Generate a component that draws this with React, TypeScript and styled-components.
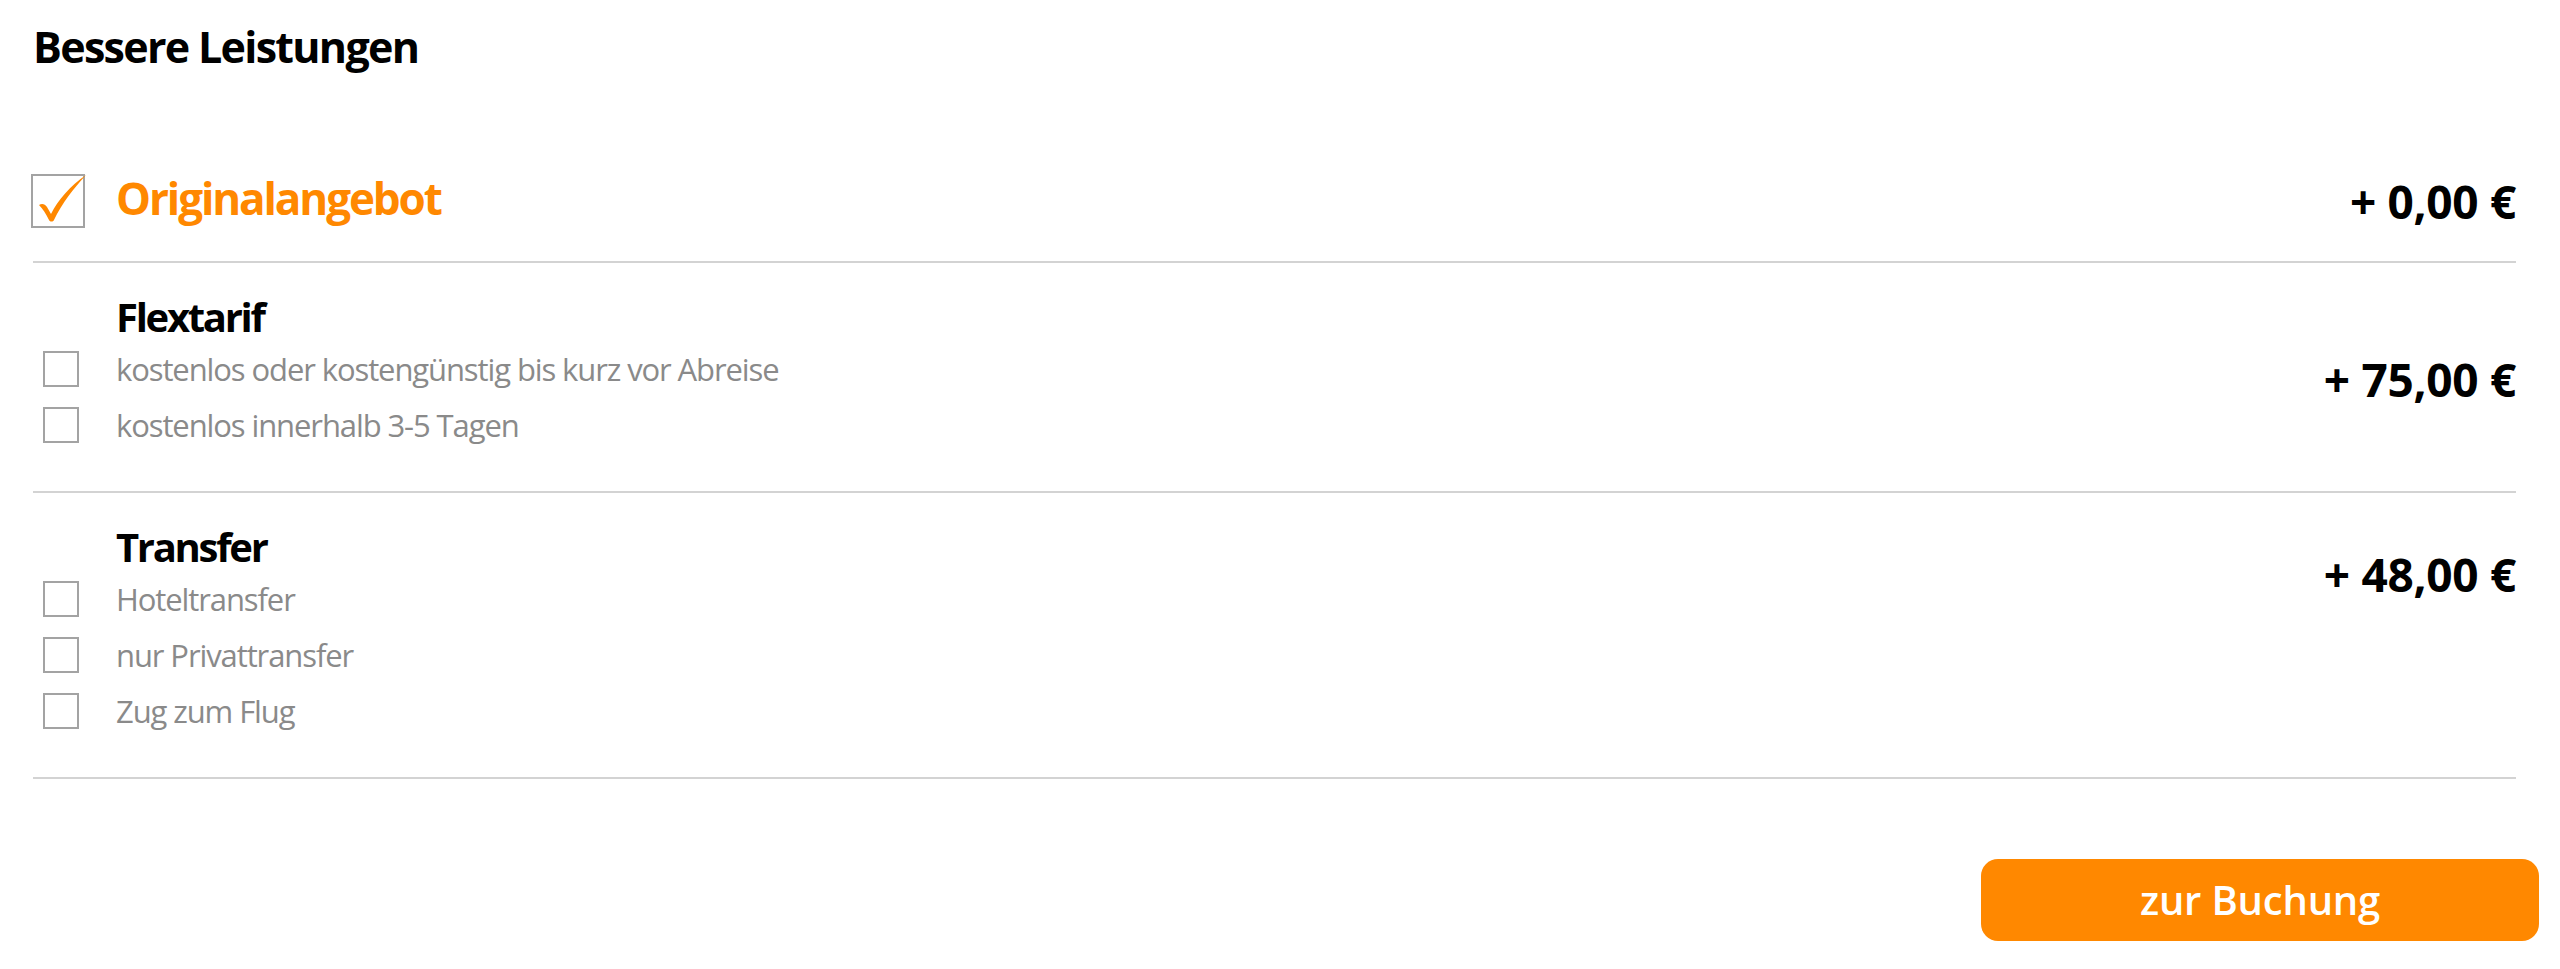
import React from 'react';
import styled, { createGlobalStyle } from 'styled-components';

const orange = '#ff8800';

const GlobalStyle = createGlobalStyle`
  html, body {
    margin: 0;
    padding: 0;
    background: #ffffff;
  }
  body {
    font-family: "Open Sans", "Noto Sans", "Liberation Sans", sans-serif;
    color: #000000;
  }
`;

const Page = styled.div`
  padding: 25px 21px 0 33px;
`;

const Heading = styled.h1`
  margin: 0;
  font-size: 43px;
  line-height: 43px;
  font-weight: 700;
  letter-spacing: -1.7px;
`;

const List = styled.div`
  margin: 73px 23px 0 0;
`;

const Section = styled.section<{ $tall?: boolean }>`
  display: flex;
  align-items: ${(p) => (p.$tall ? 'flex-start' : 'center')};
  border-bottom: 2px solid #d3d3d3;
  ${(p) => (p.$tall ? 'padding: 30px 0 38px;' : 'height: 120px;')}
`;

const Body = styled.div`
  flex: 1;
  display: flex;
  flex-direction: column;
`;

const Marker = styled.div`
  width: 83px;
  flex: none;
  display: flex;
  align-items: center;
`;

const Box = styled.span<{ $big?: boolean }>`
  box-sizing: border-box;
  display: block;
  width: ${(p) => (p.$big ? '54px' : '36px')};
  height: ${(p) => (p.$big ? '54px' : '36px')};
  margin-left: ${(p) => (p.$big ? '-2px' : '10px')};
  border: 2px solid #a3a3a3;
  background: #ffffff;
  position: relative;
`;

const Tick = styled.svg`
  position: absolute;
  left: -2px;
  top: -2px;
  width: 56px;
  height: 56px;
  overflow: visible;
`;

const OriginalLabel = styled.span`
  font-size: 44px;
  line-height: 44px;
  font-weight: 700;
  letter-spacing: -2.1px;
  color: ${orange};
  padding-bottom: 6px;
`;

const GroupTitle = styled.div`
  padding-left: 83px;
  font-size: 40px;
  line-height: 48px;
  font-weight: 700;
  letter-spacing: -2.3px;
`;

const Option = styled.label`
  display: flex;
  align-items: center;
  height: 56px;
  font-size: 31px;
  letter-spacing: -1.1px;
  color: #8a8a8a;
  cursor: pointer;
`;

const Price = styled.div<{ $offset?: number }>`
  flex: none;
  align-self: ${(p) => (p.$offset === undefined ? 'center' : 'flex-start')};
  margin-top: ${(p) => p.$offset ?? 0}px;
  font-size: 46px;
  line-height: 46px;
  font-weight: 700;
  letter-spacing: -0.3px;
  white-space: nowrap;
`;

const Footer = styled.div`
  display: flex;
  justify-content: flex-end;
  padding-top: 80px;
`;

const BookButton = styled.button`
  width: 558px;
  height: 82px;
  border: none;
  border-radius: 17px;
  background: ${orange};
  color: #ffffff;
  font-family: "Open Sans", "Noto Sans", sans-serif;
  font-size: 40px;
  font-weight: 600;
  letter-spacing: -0.2px;
  padding: 0 0 2px;
  cursor: pointer;
`;

type Group = {
  title: string;
  price: string;
  offset: number;
  options: string[];
};

const groups: Group[] = [
  {
    title: 'Flextarif',
    price: '+ 75,00 €',
    offset: 63,
    options: ['kostenlos oder kostengünstig bis kurz vor Abreise', 'kostenlos innerhalb 3-5 Tagen'],
  },
  {
    title: 'Transfer',
    price: '+ 48,00 €',
    offset: 28,
    options: ['Hoteltransfer', 'nur Privattransfer', 'Zug zum Flug'],
  },
];

function CheckMark() {
  return (
    <Tick viewBox="0 0 56 56">
      <path
        d="M8 31 C11 29 14 30 16 33 L20 40 C27 26 39 12 55 1 C43 14 31 29 23 46 C22 48 19 48 18 46 C15 40 12 35 8 31 Z"
        fill={orange}
      />
    </Tick>
  );
}

export default function App() {
  return (
    <Page>
      <GlobalStyle />
      <Heading>Bessere Leistungen</Heading>
      <List>
        <Section>
          <Body>
            <Option as="div">
              <Marker>
                <Box $big>
                  <CheckMark />
                </Box>
              </Marker>
              <OriginalLabel>Originalangebot</OriginalLabel>
            </Option>
          </Body>
          <Price>+ 0,00 €</Price>
        </Section>
        {groups.map((g) => (
          <Section $tall key={g.title}>
            <Body>
              <GroupTitle>{g.title}</GroupTitle>
              {g.options.map((o) => (
                <Option key={o}>
                  <Marker>
                    <Box />
                  </Marker>
                  {o}
                </Option>
              ))}
            </Body>
            <Price $offset={g.offset}>{g.price}</Price>
          </Section>
        ))}
      </List>
      <Footer>
        <BookButton>zur Buchung</BookButton>
      </Footer>
    </Page>
  );
}
